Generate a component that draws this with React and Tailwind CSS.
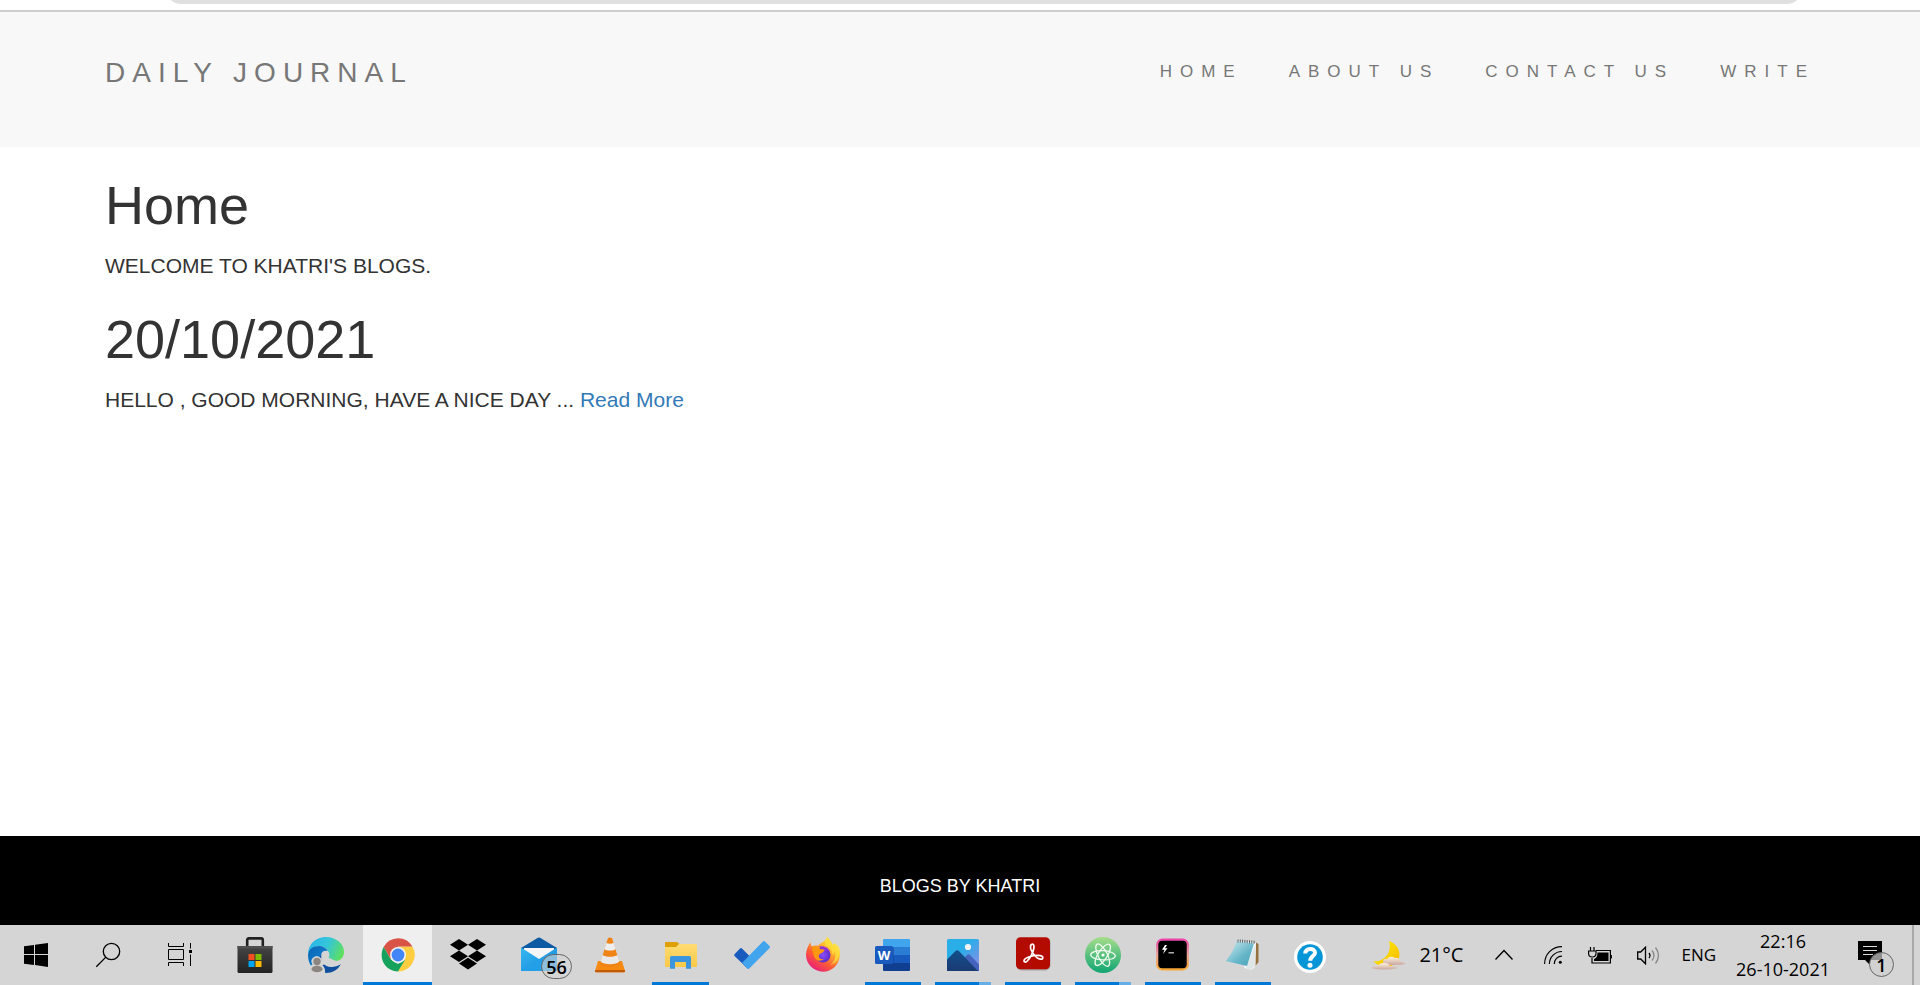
import React from "react";

const navLinks = ["HOME", "ABOUT US", "CONTACT US", "WRITE"];

function Icon({ children }) {
  return (
    <svg viewBox="0 0 36 36" className="h-9 w-9 overflow-visible" aria-hidden="true">
      {children}
    </svg>
  );
}

const StartIcon = () => (
  <Icon>
    <path d="M6 9.3 16 8v9H6zM17 7.8 30 6v11H17zM6 18h10v10L6 26.8zM17 18h13v12l-13-1.9z" />
  </Icon>
);

const SearchIcon = () => (
  <Icon>
    <g fill="none" stroke="#000" strokeWidth="1.3">
      <circle cx="21.5" cy="14.5" r="8.2" />
      <path d="M15.6 20.4 6.3 29.8" />
    </g>
  </Icon>
);

const TaskViewIcon = () => (
  <Icon>
    <g fill="none" stroke="#000" strokeWidth="1">
      <path d="M6.5 6v3.5h15V6M6.5 29v-3.5h15V29M6.5 12.5h15v10h-15zM28.5 6v5.5M28.5 17.5V29" />
    </g>
    <path d="M27 13h3v3h-3z" />
  </Icon>
);

const StoreIcon = () => (
  <Icon>
    <defs>
      <linearGradient id="storeBody" x1="0" y1="0" x2="0" y2="1">
        <stop offset="0" stopColor="#454545" />
        <stop offset="1" stopColor="#232323" />
      </linearGradient>
    </defs>
    <path d="M10.2 10.5V3q0-1.6 1.6-1.6h12.4q1.6 0 1.6 1.6v7.5" fill="none" stroke="#202020" strokeWidth="2.6" />
    <path d="M.5 9h35v25.5q0 1.5-1.5 1.5H2Q.5 36 .5 34.5z" fill="url(#storeBody)" />
    <path d="M.5 9h35v2.6H.5z" fill="#505050" />
    <path d="M11.5 17h6v6h-6z" fill="#f25022" />
    <path d="M18.5 17h6v6h-6z" fill="#7fba00" />
    <path d="M11.5 24h6v6h-6z" fill="#00a4ef" />
    <path d="M18.5 24h6v6h-6z" fill="#ffb900" />
  </Icon>
);

const EdgeIcon = () => (
  <Icon>
    <defs>
      <linearGradient id="edgeTop" x1="0" y1=".3" x2="1" y2=".6">
        <stop offset="0" stopColor="#2bb5ea" />
        <stop offset=".5" stopColor="#34c6d8" />
        <stop offset="1" stopColor="#5fe05a" />
      </linearGradient>
      <linearGradient id="edgeMid" x1="0" y1="0" x2="1" y2="1">
        <stop offset="0" stopColor="#0a64b4" />
        <stop offset="1" stopColor="#1490df" />
      </linearGradient>
    </defs>
    <path d="M0 17C0 7 8 0 18 0c10.5 0 18 7 18 15 0 6-4.500 9.500-10 9.500-4 0-7-1.500-7-3 0-1 1.800-1.800 1.800-4.500C20.800 12 16 9 11 9 5 9 1 13 0 17z" fill="url(#edgeTop)" />
    <path d="M0 18C.5 12 5 9 11 9c4 0 7.500 2 9 5-3-1-6 .5-7 4-2 7 3 13 9 14.500-1.500 2-4 3.500-6.500 3.300C6 35 0 28 0 18z" fill="url(#edgeMid)" />
    <path d="M13.500 17c-1.500 8 4 14 11 13 3.500-.4 6-1.500 8.500-3-3 6-9 9-15 9-7-2-10-13-4.500-19z" fill="#104f9e" />
    <circle cx="17.500" cy="18" r="3.900" fill="#d5d5d5" />
    <path d="M11 25c2-4 4-5 5.500-4h5c3 2 7 3.200 11.500 3.500l-.5 3q-5 1.700-9.500.3L17 27l-4 2z" fill="#d5d5d5" />
    <path d="M1 36c-1-5 1-7 3.500-8.500A5.200 5.200 0 1 1 13 27.500c3 1.500 4.500 4 4 8.500z" fill="#d5d5d5" />
    <circle cx="9" cy="24.500" r="3.700" fill="#8c8581" />
    <path d="M3.500 32.500c0-5 11-5 11 0-1.500 3.500-9.500 3.500-11 0z" fill="#8c8581" />
  </Icon>
);

const ChromeIcon = () => (
  <Icon>
    <path d="M18 9.600H32.400A16.600 16.600 0 0 1 18 34.500l7.300-12.500z" fill="#ffcd40" />
    <path d="M10.700 22.200 3.600 9.900A17 17 0 0 1 18 1.200a16.600 16.600 0 0 1 14.400 8.400H18z" fill="#d95347" />
    <path d="M10.700 22.200 3.600 9.900C-2 21 5 34 18 34.500l7.300-12.300L18 27z" fill="#16a15c" />
    <circle cx="18" cy="18" r="8" fill="#f1f1f1" />
    <circle cx="18" cy="18" r="6.400" fill="#4285f4" />
  </Icon>
);

const DropboxIcon = () => (
  <Icon>
    <path d="m9 2 9 5.800-9 5.700-9-5.700zM27 2l9 5.800-9 5.700-9-5.700zM9 13.500l9 5.700L9 25l-9-5.800zM27 13.500l9 5.700-9 5.800-9-5.800zM18 20.800l9 5.700-9 6-9-6z" />
  </Icon>
);

const MailIcon = () => (
  <Icon>
    <defs>
      <linearGradient id="mailFront" x1="0" y1="0" x2="1" y2="1">
        <stop offset="0" stopColor="#35b8f1" />
        <stop offset="1" stopColor="#1686d9" />
      </linearGradient>
    </defs>
    <path d="M0 11 16.500 1q1.500-.8 3 0L36 11v10H0z" fill="#0c59a4" />
    <path d="M3 11h30v8L18 26 3 19z" fill="#f6f6f6" />
    <path d="M0 10.500 18 22l18-11.500V34H0z" fill="url(#mailFront)" />
    <path d="M0 34 18 22l18 12z" fill="#229fe6" />
  </Icon>
);

const VlcIcon = () => (
  <Icon>
    <path d="M6 24h24l3 10q0 1.200-1 1.200H4q-1 0-1-1.200z" fill="#f58a12" />
    <path d="M3 33h30v1.200q0 1-1 1H4q-1 0-1-1z" fill="#c55a06" />
    <path d="M16 1q2-1 4 0l8 26c-3 4-17 4-20 0z" fill="#f08316" />
    <path d="m14.300 6-1.900 6.300c2 1.700 9.200 1.700 11.200 0L21.700 6c-2 1-5.400 1-7.400 0z" fill="#eee" />
    <path d="m10.600 18-2 6.500c3 3.600 15.800 3.600 18.800 0l-2-6.500c-3 2.400-11.800 2.400-14.800 0z" fill="#e9e9e9" />
  </Icon>
);

const FolderIcon = () => (
  <Icon>
    <defs>
      <linearGradient id="folderBody" x1="0" y1="0" x2="0" y2="1">
        <stop offset="0" stopColor="#ffdc74" />
        <stop offset="1" stopColor="#fbc846" />
      </linearGradient>
    </defs>
    <path d="M2 6q0-1 1-1h11l2.500 2-2 3.500H2z" fill="#dea005" />
    <path d="M2 10h11l3-3h17q1 0 1 1v21q0 1-1 1H3q-1 0-1-1z" fill="url(#folderBody)" />
    <path d="M7 31.700V20.500q0-1.500 1.500-1.500h18q1.500 0 1.500 1.500v11.200h-5V25H12v6.700z" fill="#3a95dc" />
  </Icon>
);

const TodoIcon = () => (
  <Icon>
    <path d="M.5 17.200 6 11.600q1-1 2 0l10 9.800-4.500 10z" fill="#185abd" />
    <path d="M.5 17.200q-.8 1 0 1.900L14.200 32l4.800-8.500z" fill="#185abd" />
    <path d="M8.200 25.800 28.900 4.400q1-1 2 0l4.700 4.700q.8 1 0 2L15.300 31.600q-1 .9-2 0z" fill="#41a5ee" />
  </Icon>
);

const FirefoxIcon = () => (
  <Icon>
    <defs>
      <linearGradient id="foxBody" x1=".9" y1="0" x2=".2" y2="1">
        <stop offset="0" stopColor="#fff44f" />
        <stop offset=".35" stopColor="#ffb52e" />
        <stop offset=".65" stopColor="#ff5a36" />
        <stop offset="1" stopColor="#e31587" />
      </linearGradient>
      <radialGradient id="foxCore">
        <stop offset="0" stopColor="#8c4bff" />
        <stop offset="1" stopColor="#5b2fc4" />
      </radialGradient>
    </defs>
    <path d="M5.500 5c0 2 .5 3.500 1.500 4.500 2-1 4-1.300 6-.8C15 6 20 5 22.500 0c2 3 4 5 5 8 1-.5 1.500-1 1.500-2 4 4 6 8 5.800 13C34 28 27 34.700 18 34.700S1 27 1 18c0-5 2-9 4.500-13z" fill="url(#foxBody)" />
    <path d="M22.500 0c-3 3-3 6-2 8 4 2 7 5 7 10 2-1 2-4 1.500-5 3 6 1 12-4 15 8-2 11-10 9.500-17-1-2-3-4-5.500-5 0 1-.5 1.500-1.500 2-1-3-3-5-5-8z" fill="#ffe13c" opacity=".75" />
    <circle cx="18" cy="18" r="7.500" fill="url(#foxCore)" />
    <path d="M14 9.500c5-1 10 1 11 6-2-2-4-2-6-1z" fill="#9434d8" />
    <path d="M7 10c3-2 6-.5 8 2 2 .3 3.500.3 4.500 1-1 3-4 3-5.500 5-1 3 2 5 5 4-3 3-9 2-10-3-.5-3-2-6-2-9z" fill="#ff980e" />
  </Icon>
);

const WordIcon = () => (
  <Icon>
    <path d="M8 3q0-1 1-1h25q1 0 1 1v7H8z" fill="#41a5ee" />
    <path d="M8 10h27v8H8z" fill="#2b7cd3" />
    <path d="M8 18h27v8H8z" fill="#185abd" />
    <path d="M8 26h27v7q0 1-1 1H9q-1 0-1-1z" fill="#103f91" />
    <path d="M10 10h8q1 0 1 1v16q0 1-1 1h-8z" fill="#103f91" opacity=".5" />
    <rect x="0" y="9" width="18" height="18" rx="1.500" fill="#185abd" />
    <text x="9" y="22.500" textAnchor="middle" fill="#fff" className="font-['Open_Sans',sans-serif] text-[13px] font-bold">W</text>
  </Icon>
);

const PhotosIcon = () => (
  <Icon>
    <defs>
      <linearGradient id="photoSky" x1="0" y1="0" x2="1" y2="1">
        <stop offset=".4" stopColor="#2aaee8" />
        <stop offset="1" stopColor="#9a86e6" />
      </linearGradient>
      <linearGradient id="photoHill" x1="0" y1="0" x2="0" y2="1">
        <stop offset="0" stopColor="#11508c" />
        <stop offset="1" stopColor="#1b3a72" />
      </linearGradient>
    </defs>
    <rect x="2" y="2" width="32" height="32" rx="1.500" fill="url(#photoSky)" />
    <path d="M18 22.500 22 18q1.500-1.300 3 0l9 9.500V34H20z" fill="#4563bd" />
    <path d="M2 22.500 10.500 14q1.700-1.400 3.400 0L33 34H2z" fill="url(#photoHill)" />
    <circle cx="23" cy="10" r="3.100" fill="#f4f4f4" />
  </Icon>
);

const AcrobatIcon = () => (
  <Icon>
    <rect x="1.500" y="1" width="34" height="32.500" rx="5" fill="#777" opacity=".5" />
    <rect x="1" y=".3" width="34" height="32" rx="4.500" fill="#b30b00" />
    <path d="M16.500 7.500c2.200-1.200 3 1.500 2.200 4.500-1 4.500-4.200 9.500-6.200 11.800-1.800 2-3.800 1.400-3.400-.4.600-3 8.800-5 13.500-5 3.500 0 5.600 1 5.200 2.600-.5 2-3.800 1.200-5.600-.2C18.500 18 14.800 12.500 15.500 9q.2-1 1-1.500z" fill="none" stroke="#fff" strokeWidth="1.700" />
  </Icon>
);

const AtomIcon = () => (
  <Icon>
    <defs>
      <linearGradient id="atomDisc" x1="0" y1="0" x2="0" y2="1">
        <stop offset="0" stopColor="#a5dd8b" />
        <stop offset="1" stopColor="#10a573" />
      </linearGradient>
    </defs>
    <circle cx="18" cy="18" r="18" fill="url(#atomDisc)" />
    <g fill="none" stroke="#effbee" strokeWidth="1.300">
      <ellipse cx="18" cy="18.300" rx="12.300" ry="4.600" transform="rotate(3 18 18)" />
      <ellipse cx="18" cy="18.300" rx="12.300" ry="4.600" transform="rotate(63 18 18)" />
      <ellipse cx="18" cy="18.300" rx="12.300" ry="4.600" transform="rotate(123 18 18)" />
    </g>
    <circle cx="18" cy="18" r="1.600" fill="#fff" />
  </Icon>
);

const TerminalIcon = () => (
  <Icon>
    <defs>
      <linearGradient id="termEdge" x1="0" y1="0" x2="0" y2="1">
        <stop offset="0" stopColor="#ee45ab" />
        <stop offset=".5" stopColor="#e9a29b" />
        <stop offset="1" stopColor="#f8a62f" />
      </linearGradient>
    </defs>
    <rect x="2.200" y="2.700" width="30.600" height="29.600" rx="5" fill="#000" stroke="url(#termEdge)" strokeWidth="2.200" />
    <path d="m10 8-3 4.700h2.500L8 17l4.500-5.700H10L12 8z" fill="#fff" />
    <path d="M13.500 15.800h5.500" stroke="#ccc" strokeWidth="1.300" />
  </Icon>
);

const NotepadIcon = () => (
  <Icon>
    <defs>
      <linearGradient id="padPage" x1="0" y1="0" x2="1" y2="1">
        <stop offset="0" stopColor="#d3edf2" />
        <stop offset=".6" stopColor="#66b6c9" />
        <stop offset="1" stopColor="#4aa0b6" />
      </linearGradient>
    </defs>
    <path d="m30 5 3.500 2v18l-4 5z" fill="#94713d" />
    <path d="m12 4 19 1.500-.5 24-4 3.500-7-2z" fill="#f4f7f7" />
    <path d="m24 24 6-16v21l-4 4-5-2z" fill="#dfe6e7" />
    <path d="M11.500 4.500 29 6.500l-7 22.500L.7 24q7-8 10.800-19.500z" fill="url(#padPage)" />
    <path d="M13 2.500v3M15.300 2.500v3M17.600 2.700v3M19.900 2.900v3M22.200 3.100v3M24.500 3.300v3M26.800 3.500v3M29.100 3.700v3" stroke="#555f61" strokeWidth="1" />
  </Icon>
);

const HelpIcon = () => (
  <Icon>
    <circle cx="18" cy="20" r="16" fill="#fff" />
    <circle cx="18" cy="20" r="12.800" fill="#0696d7" />
    <path d="M13.300 16.500c0-6 9.700-6 9.700-.8 0 3.600-4.800 3.300-4.800 8" fill="none" stroke="#fff" strokeWidth="4" />
    <circle cx="18" cy="28.200" r="2.500" fill="#fff" />
  </Icon>
);

const WeatherIcon = () => (
  <Icon>
    <defs>
      <linearGradient id="moon" x1="0" y1="0" x2="1" y2="1">
        <stop offset="0" stopColor="#fff200" />
        <stop offset="1" stopColor="#f5b800" />
      </linearGradient>
      <linearGradient id="cloud" x1="0" y1="0" x2="0" y2="1">
        <stop offset="0" stopColor="#fff3dd" />
        <stop offset="1" stopColor="#c8a7a0" />
      </linearGradient>
    </defs>
    <path d="M18 4c7 2 12 9 10 17-3 10-18 12-26 3 8 2 20-6 16-20z" fill="url(#moon)" />
    <path d="M12 24q1-3 4-2 3-4 8-1 4-1 5 3l6 3q-12 2-23 0z" fill="url(#cloud)" />
    <path d="M0 31q3-3 7-2 1-3 6-3 5 0 6 3 6 0 8 2-14 3-27 0z" fill="url(#cloud)" />
  </Icon>
);

const pinnedApps = [
  { name: "Microsoft Store", Glyph: StoreIcon },
  { name: "Edge", Glyph: EdgeIcon },
  { name: "Chrome", Glyph: ChromeIcon, active: true },
  { name: "Dropbox", Glyph: DropboxIcon },
  { name: "Mail", Glyph: MailIcon, badge: "56" },
  { name: "VLC", Glyph: VlcIcon },
  { name: "File Explorer", Glyph: FolderIcon, running: true },
  { name: "To Do", Glyph: TodoIcon },
  { name: "Firefox", Glyph: FirefoxIcon },
];

const runningApps = [
  { name: "Word", Glyph: WordIcon, running: true },
  { name: "Photos", Glyph: PhotosIcon, running: true, stacked: true },
  { name: "Acrobat", Glyph: AcrobatIcon, running: true },
  { name: "Atom", Glyph: AtomIcon, running: true, stacked: true },
  { name: "Hyper", Glyph: TerminalIcon, running: true },
  { name: "Notepad", Glyph: NotepadIcon, running: true },
];

function AppButton({ app, width }) {
  const { name, Glyph, active, running, stacked, badge } = app;
  return (
    <button
      type="button"
      aria-label={name}
      className={`relative flex h-[60px] shrink-0 items-center justify-center ${active ? "ml-[2px] w-[69px] border-b-[3px] border-[#0078d7] bg-[#efefef] pt-[3px]" : width}`}
    >
      <Glyph />
      {badge && (
        <span className="absolute top-[29px] left-[38px] flex h-[25px] w-[31px] items-center justify-center rounded-full border border-[#666] bg-[#d5d5d5]/60 text-[18px] leading-none font-semibold">
          {badge}
        </span>
      )}
      {running && (
        <span className="absolute inset-x-[7px] bottom-0 flex h-[3px] bg-[#0078d7]">
          {stacked && <span className="ml-auto w-3 bg-[#66aee7]" />}
        </span>
      )}
    </button>
  );
}

function Taskbar() {
  return (
    <div className="flex h-[60px] items-center bg-[#d5d5d5] font-['Open_Sans','Noto_Sans',sans-serif] text-[18px] text-black">
      <div className="flex">
        <button type="button" aria-label="Start" className="flex w-[72px] justify-center"><StartIcon /></button>
        <button type="button" aria-label="Search" className="flex w-[72px] justify-center"><SearchIcon /></button>
        <button type="button" aria-label="Task View" className="flex w-[72px] justify-center"><TaskViewIcon /></button>
      </div>
      <div className="ml-[3px] flex items-center">
        {pinnedApps.map((app) => <AppButton key={app.name} app={app} width="w-[71px]" />)}
        {runningApps.map((app) => <AppButton key={app.name} app={app} width="w-[70px]" />)}
        <AppButton app={{ name: "Help", Glyph: HelpIcon }} width="w-[64px]" />
      </div>
      <div className="ml-auto flex h-full items-center">
        <button type="button" className="flex items-center gap-3">
          <WeatherIcon />
          <span className="text-[20px] leading-6">21°C</span>
        </button>
        <button type="button" aria-label="Show hidden icons" className="ml-[32px]">
          <svg width="18" height="12" viewBox="0 0 18 12" fill="none" stroke="#000" strokeWidth="1.400"><path d="m.5 10.500 8.500-9 8.500 9" /></svg>
        </button>
        <button type="button" aria-label="Network" className="ml-[31px]">
          <svg width="18" height="18" viewBox="0 0 18 18" fill="none" stroke="#000" strokeWidth="1.200">
            <path d="M.6 18C.6 8 8 .6 18 .6M5.400 18C5.400 11 11 5.500 18 5.500M10.300 18c0-4.500 3.200-7.800 7.700-7.800" />
            <circle cx="16.300" cy="16.300" r="1.500" fill="#000" stroke="none" />
          </svg>
        </button>
        <button type="button" aria-label="Battery" className="ml-[26px]">
          <svg width="24" height="17" viewBox="0 0 24 17" fill="none" stroke="#000" strokeWidth="1.200">
            <path d="M8 3.500h14.400v12.500H4V11M23.300 8v3.500" />
            <path d="M9.500 5.500h11V14H6v-2q3.500-1 3.500-6.500z" fill="#000" stroke="none" />
            <path d="M2.500 0v4M6 0v4M.6 4h7.400v2.500Q8 10 4.300 10T.6 6.500z" />
          </svg>
        </button>
        <button type="button" aria-label="Volume" className="ml-[25px]">
          <svg width="23" height="19" viewBox="0 0 23 19" fill="none" stroke="#000" strokeWidth="1.300">
            <path d="M.7 6v7h3l4.800 4.800V1.200L3.700 6z" />
            <path d="M12 7q2 2.500 0 5" />
            <path d="M15 4.500q4 5 0 10M18.500 1.500q6 8 0 16" stroke="#888" />
          </svg>
        </button>
        <button type="button" className="ml-[21px] text-[17px]">ENG</button>
        <button type="button" className="ml-[20px] flex h-full flex-col items-center justify-center leading-7">
          <span>22:16</span>
          <span>26-10-2021</span>
        </button>
        <button type="button" aria-label="Notifications" className="relative ml-[28px] h-9 w-9">
          <svg width="24" height="24" viewBox="0 0 24 24" className="mb-1">
            <path d="M0 0h24v19H12v5l-5-5H0z" />
            <path d="M5 5.500h14M5 9.500h14M5 13.500h10" stroke="#ddd" strokeWidth="1.200" />
          </svg>
          <span className="absolute right-0 -bottom-1 flex h-[25px] w-[25px] items-center justify-center rounded-full border border-[#666] bg-[#cfcfcf]/70 text-[18px] leading-none font-semibold">1</span>
        </button>
        <span className="mr-[6px] ml-[18px] h-full w-[2px] bg-[#a9a9a9]" />
      </div>
    </div>
  );
}

export default function App() {
  return (
    <div className="flex min-h-screen flex-col bg-white font-['Liberation_Sans',Arial,sans-serif] text-[#333]">
      <div className="h-3 border-b-2 border-[#cdcdcd]">
        <div className="mr-[116px] ml-[164px] flex h-1 items-end overflow-hidden">
          <div className="h-9 w-full shrink-0 rounded-full bg-[#e0e0e0]" />
        </div>
      </div>
      <header className="flex items-center justify-between bg-[#f8f8f8] px-[105px] pt-[41px] pb-[54px] text-[#777]">
        <a href="#home" className="text-[28px] leading-10 tracking-[7px]">DAILY JOURNAL</a>
        <nav className="flex gap-[46px] pb-[2px]">
          {navLinks.map((label) => (
            <a key={label} href="#home" className="text-[17px] leading-6 tracking-[8px]">{label}</a>
          ))}
        </nav>
      </header>
      <main className="flex-1 px-[105px] pt-7">
        <section className="mb-[26px]">
          <h1 className="text-[54px] leading-[60px]">Home</h1>
          <p className="mt-[13px] text-[21px] leading-[35px]">WELCOME TO KHATRI'S BLOGS.</p>
        </section>
        <section>
          <h1 className="text-[54px] leading-[60px]">20/10/2021</h1>
          <p className="mt-[13px] text-[21px] leading-[35px]">
            HELLO , GOOD MORNING, HAVE A NICE DAY ... <a href="#read-more" className="text-[#337ab7]">Read More</a>
          </p>
        </section>
      </main>
      <footer className="flex h-[89px] items-center justify-center bg-black pt-[10px] text-[18px] leading-6 text-white">
        <p>BLOGS BY KHATRI</p>
      </footer>
      <Taskbar />
    </div>
  );
}
